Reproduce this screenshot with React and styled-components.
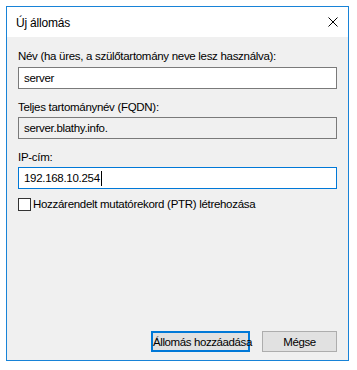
import React from 'react';
import styled, { createGlobalStyle } from 'styled-components';

const GlobalStyle = createGlobalStyle`
  html, body {
    margin: 0;
    padding: 0;
    background: #fff;
  }
  body {
    font-family: 'Liberation Sans', Arial, sans-serif;
    font-size: 11.5px;
    letter-spacing: -0.3px;
    color: #000;
  }
`

const Page = styled.div`
  padding: 6px 8px 9px 6px;
  width: 357px;
  height: 370px;
  box-sizing: border-box;
`

const Window = styled.div`
  height: 355px;
  border: 1px solid #1883d7;
  display: flex;
  flex-direction: column;
  box-sizing: border-box;
`

const TitleBar = styled.div`
  height: 30px;
  background: #fff;
  display: flex;
  align-items: center;
  justify-content: space-between;
  padding: 0 0 0 9px;
`

const Title = styled.span`
  font-size: 12px;
  letter-spacing: -0.2px;
  padding-top: 1px;
`

const CloseButton = styled.div`
  width: 30px;
  height: 30px;
  display: flex;
  align-items: center;
  justify-content: center;
`

const Body = styled.div`
  flex: 1;
  background: #f0f0f0;
  display: flex;
  flex-direction: column;
  padding: 11px 11px 8px 11px;
`

const Label = styled.div`
  line-height: 16px;
  margin-bottom: ${p => p.gap || 3}px;
`

const Field = styled.div`
  height: 22px;
  box-sizing: border-box;
  border: 1px solid ${p => (p.focused ? '#0078d7' : '#7a7a7a')};
  background: ${p => (p.readOnly ? '#f0f0f0' : '#fff')};
  display: flex;
  align-items: center;
  padding-left: 5px;
  margin-bottom: ${p => p.gap || 10}px;
`

const Caret = styled.span`
  display: inline-block;
  width: 1px;
  height: 15px;
  background: #000;
  margin-left: 1px;
`

const CheckRow = styled.label`
  display: flex;
  align-items: center;
  gap: 2px;
  line-height: 13px;
`

const Box = styled.span`
  width: 13px;
  height: 13px;
  box-sizing: border-box;
  border: 1px solid #333;
  background: #fff;
`

const Buttons = styled.div`
  margin-top: auto;
  display: flex;
  justify-content: flex-end;
  gap: 12px;
`

const Button = styled.button`
  height: 21px;
  width: ${p => (p.primary ? 99 : 75)}px;
  box-sizing: border-box;
  padding: 0;
  font-family: inherit;
  font-size: 11.5px;
  letter-spacing: -0.4px;
  white-space: nowrap;
  color: #000;
  background: #e1e1e1;
  border: ${p => (p.primary ? '2px solid #0078d7' : '1px solid #adadad')};
  border-radius: 0;
`

export default function App() {
  return (
    <Page>
      <GlobalStyle />
      <Window>
        <TitleBar>
          <Title>Új állomás</Title>
          <CloseButton>
            <svg width="10" height="10" viewBox="0 0 10 10">
              <path d="M0.5 0.5 L9.5 9.5 M9.5 0.5 L0.5 9.5" stroke="#000" strokeWidth="1" fill="none" />
            </svg>
          </CloseButton>
        </TitleBar>
        <Body>
          <Label>Név (ha üres, a szülőtartomány neve lesz használva):</Label>
          <Field>server</Field>
          <Label gap={2}>Teljes tartománynév (FQDN):</Label>
          <Field readOnly>server.blathy.info.</Field>
          <Label gap={2}>IP-cím:</Label>
          <Field focused gap={9}>192.168.10.254<Caret /></Field>
          <CheckRow>
            <Box />
            Hozzárendelt mutatórekord (PTR) létrehozása
          </CheckRow>
          <Buttons>
            <Button primary>Állomás hozzáadása</Button>
            <Button>Mégse</Button>
          </Buttons>
        </Body>
      </Window>
    </Page>
  );
}
